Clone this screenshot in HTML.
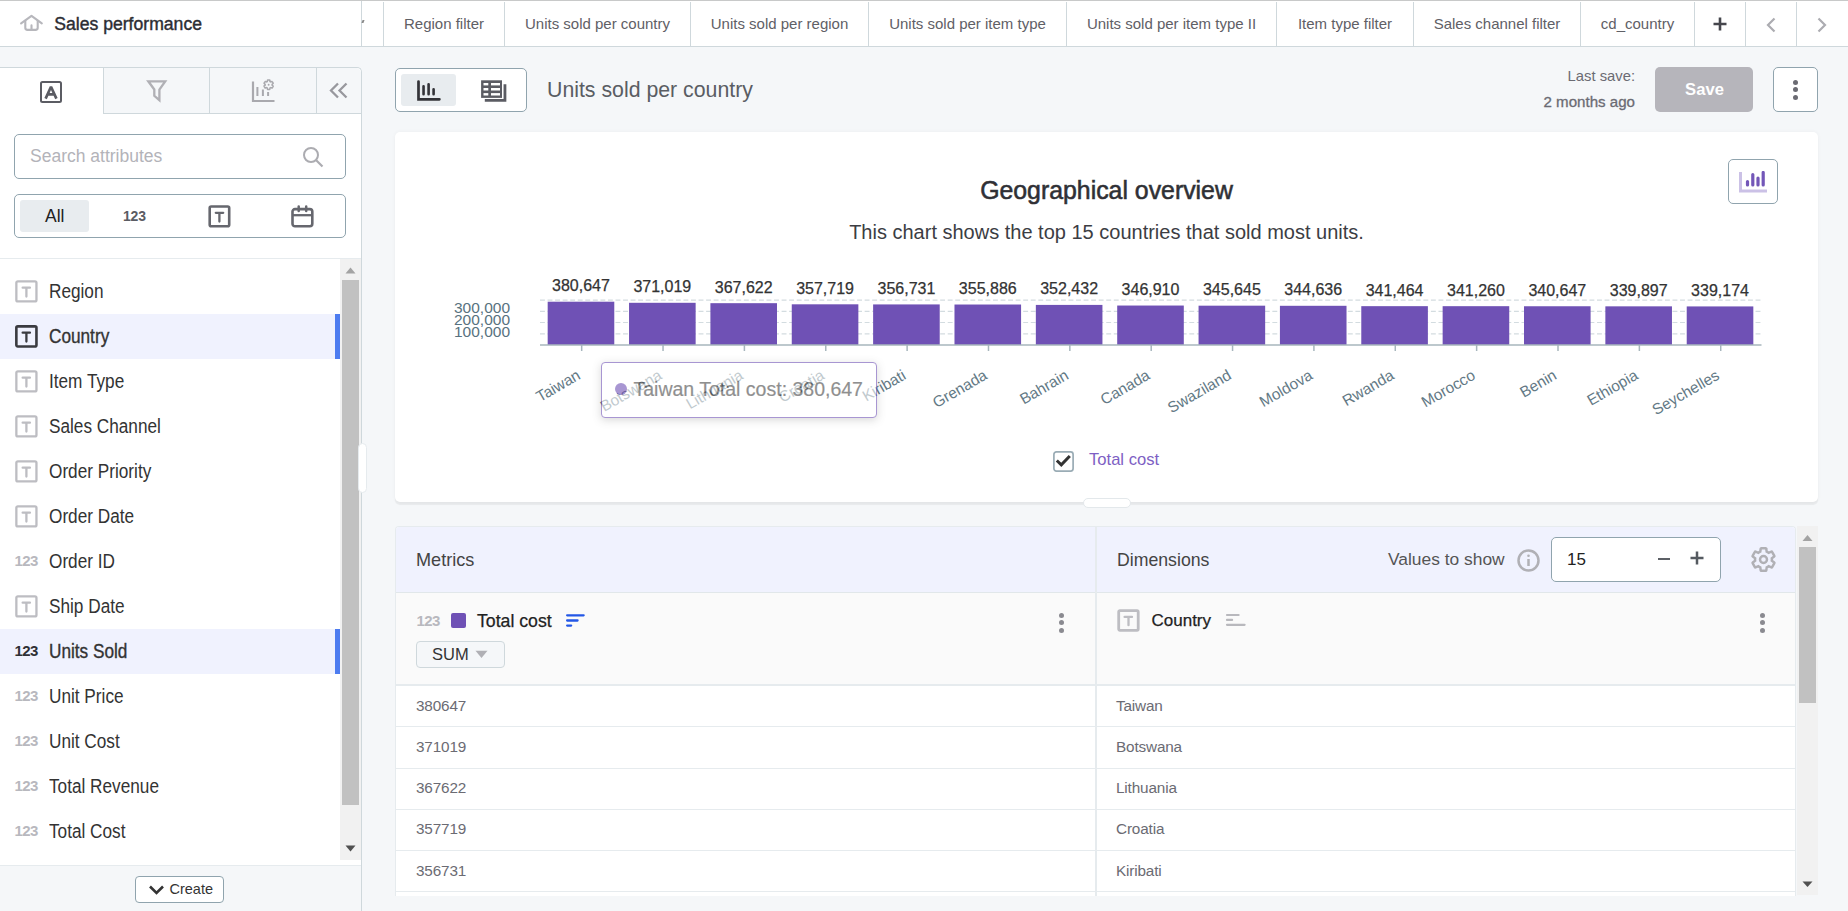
<!DOCTYPE html>
<html><head><meta charset="utf-8">
<style>
*{box-sizing:border-box;margin:0;padding:0}
html,body{width:1848px;height:911px;overflow:hidden}
body{position:relative;background:#f5f7f9;font-family:"Liberation Sans",sans-serif;color:#333}
.a{position:absolute}
.hdr{left:0;top:0;width:1848px;height:47px;background:#fff;border-top:1px solid #c8c9c9;border-bottom:1px solid #cfd8dc}
.tab{position:absolute;top:2px;height:44px;border-left:1px solid #cfd8dc;font-size:15px;color:#5f6066;text-align:center;line-height:43px;white-space:nowrap}
.side{left:0;top:67px;width:362px;height:844px;background:#fff;border-top:1px solid #cfd8dc;border-right:1px solid #cfd8dc;border-top-right-radius:5px}
.stab{position:absolute;top:0;height:46px;background:#f5f7f9;border-left:1px solid #cfd8dc;border-bottom:1px solid #cfd8dc}
.row{position:absolute;left:0;width:340px;height:45px}
.row .lbl{position:absolute;left:49px;top:0px;line-height:45px;font-size:20px;color:#333;white-space:nowrap;transform:scaleX(0.86);transform-origin:0 50%}
.ticon{position:absolute;left:15px;top:11px;width:23px;height:23px;border:2px solid #bdbdc2;border-radius:2px}
.ticon:after{content:"";position:absolute}
.n123{position:absolute;left:14.6px;top:-1.5px;line-height:45px;font-size:15px;font-weight:bold;color:#b8b8be;letter-spacing:-0.6px}
</style></head><body>

<!-- HEADER -->
<div class="a hdr"></div>
<div class="a" style="left:361px;top:1px;width:1px;height:45px;background:#cfd8dc"></div>
<svg class="a" style="left:19px;top:14px" width="25" height="19" viewBox="0 0 25 19">
  <path d="M2.1 9.3L12.5 1.9L22.8 9.3" fill="none" stroke="#b7b7bc" stroke-width="2.1" stroke-linecap="round" stroke-linejoin="round"/>
  <path d="M6.3 6.8V13.8Q6.3 15.9 8.4 15.9H16.6Q18.7 15.9 18.7 13.8V6.8M12.5 11.4V15.9" fill="none" stroke="#b7b7bc" stroke-width="2.1" stroke-linecap="round"/>
</svg>
<div class="a" style="left:54.3px;top:13.5px;font-size:17.6px;color:#2c2d33;white-space:nowrap;line-height:20px;-webkit-text-stroke:0.4px #2c2d33">Sales performance</div>

<div class="tab" style="left:383px;width:121px">Region filter</div>
<div class="tab" style="left:504px;width:186px">Units sold per country</div>
<div class="tab" style="left:690px;width:178px">Units sold per region</div>
<div class="tab" style="left:868px;width:198px">Units sold per item type</div>
<div class="tab" style="left:1066px;width:210px">Units sold per item type II</div>
<div class="tab" style="left:1276px;width:137px">Item type filter</div>
<div class="tab" style="left:1413px;width:167px">Sales channel filter</div>
<div class="tab" style="left:1580px;width:114px">cd_country</div>
<div class="tab" style="left:1694px;width:51px"></div>
<div class="tab" style="left:1745px;width:51px"></div>
<div class="tab" style="left:1796px;width:52px"></div>

<svg class="a" style="left:1712px;top:16px" width="16" height="16" viewBox="0 0 16 16"><path d="M8 1.5V14.5M1.5 8H14.5" stroke="#45464c" stroke-width="2.6"/></svg>
<svg class="a" style="left:1765px;top:17px" width="12" height="16" viewBox="0 0 12 16"><path d="M9.5 1.5L3 8L9.5 14.5" fill="none" stroke="#acacb1" stroke-width="2.2"/></svg>
<svg class="a" style="left:1816px;top:17px" width="12" height="16" viewBox="0 0 12 16"><path d="M2.5 1.5L9 8L2.5 14.5" fill="none" stroke="#acacb1" stroke-width="2.2"/></svg>
<div class="a" style="left:362px;top:20px;width:1.5px;height:3px;background:#8a8a8a;transform:skewX(-20deg)"></div>

<!-- SIDEBAR -->
<div class="a side">
  <div class="stab" style="left:103px;width:106px"></div>
  <div class="stab" style="left:209px;width:107px"></div>
  <div class="stab" style="left:316px;width:45px;border-top-right-radius:5px"></div>
</div>
<!-- A icon -->
<svg class="a" style="left:39px;top:80px" width="24" height="24" viewBox="0 0 24 24">
  <rect x="2" y="2" width="20" height="20" rx="1.5" fill="none" stroke="#5b5c63" stroke-width="2"/>
  <path d="M6.6 18.6L12 6.8L17.4 18.6M8.5 14.3H15.5" fill="none" stroke="#5b5c63" stroke-width="2.7" stroke-linejoin="bevel"/>
</svg>
<!-- funnel -->
<svg class="a" style="left:146px;top:79px" width="22" height="24" viewBox="0 0 22 24">
  <path d="M2.3 2.3H19.2L13.4 10.5V21.2L8.3 16.8V10.5Z" fill="none" stroke="#b0b0b5" stroke-width="2.3" stroke-linejoin="miter"/>
</svg>
<!-- chart gear -->
<svg class="a" style="left:250px;top:78px" width="26" height="26" viewBox="0 0 26 26">
  <path d="M3 3.5V23H24.5" fill="none" stroke="#a9a9ae" stroke-width="2.2"/>
  <path d="M7.4 9V18M12.9 11.5V18M18.1 14V18" fill="none" stroke="#a9a9ae" stroke-width="2"/>
  <g transform="translate(13 1.1) scale(0.47)">
  <path fill="none" stroke="#a9a9ae" stroke-width="3.3" d="M19.4 13c.04-.32.06-.66.06-1s-.02-.68-.06-1l2.1-1.65c.19-.15.24-.42.12-.64l-2-3.46c-.12-.22-.39-.3-.61-.22l-2.49 1c-.52-.4-1.08-.73-1.690-.98l-.38-2.65C14.46 2.18 14.25 2 14 2h-4c-.25 0-.46.18-.49.42l-.38 2.65c-.61.25-1.170.59-1.69.98l-2.49-1c-.23-.09-.49 0-.61.22l-2 3.46c-.13.22-.07.49.12.64L4.57 11c-.04.32-.07.65-.07 1s.03.68.07 1l-2.11 1.650c-.19.15-.24.42-.12.64l2 3.46c.12.22.39.3.61.22l2.49-1c.52.4 1.08.73 1.69.98l.38 2.65c.03.24.24.42.49.42h4c.25 0 .46-.18.49-.42l.38-2.65c.61-.25 1.17-.59 1.69-.98l2.49 1c.23.09.49 0 .61-.22l2-3.460c.12-.22.07-.49-.12-.64L19.4 13z"/>
  <circle cx="12" cy="12" r="2" fill="#a9a9ae"/>
  </g>
</svg>
<!-- << -->
<svg class="a" style="left:329px;top:82px" width="20" height="18" viewBox="0 0 20 18">
  <path d="M9 1.5L2 8.5L9 15.5M17.5 1.5L10.5 8.5L17.5 15.5" fill="none" stroke="#98989e" stroke-width="2.3"/>
</svg>

<!-- search -->
<div class="a" style="left:14px;top:134px;width:332px;height:45px;border:1px solid #90a4ae;border-radius:5px;background:#fff"></div>
<div class="a" style="left:30px;top:146px;font-size:17.5px;color:#b3b3b9;line-height:20px;white-space:nowrap">Search attributes</div>
<svg class="a" style="left:302px;top:146px" width="23" height="23" viewBox="0 0 23 23">
  <circle cx="9" cy="9" r="7" fill="none" stroke="#acacb1" stroke-width="2"/>
  <path d="M14 14L20.5 20.5" stroke="#acacb1" stroke-width="2.2"/>
</svg>

<!-- filter -->
<div class="a" style="left:14px;top:194px;width:332px;height:44px;border:1px solid #90a4ae;border-radius:5px;background:#fff"></div>
<div class="a" style="left:20px;top:200px;width:69px;height:32px;background:#e8ecef;border-radius:3px"></div>
<div class="a" style="left:45px;top:206px;font-size:17.5px;color:#222;line-height:20px">All</div>
<div class="a" style="left:123px;top:207px;font-size:14px;font-weight:bold;color:#5b5c63;line-height:18px;letter-spacing:-0.2px">123</div>
<svg class="a" style="left:207px;top:204px" width="25" height="25" viewBox="0 0 25 25">
  <rect x="2.7" y="2.5" width="19.5" height="19.8" rx="1.5" fill="none" stroke="#66676e" stroke-width="2.6"/>
  <path d="M8.8 8.8H16.2M12.4 8.8V17.5" fill="none" stroke="#66676e" stroke-width="2.3" stroke-linecap="round"/>
</svg>
<svg class="a" style="left:290px;top:204px" width="25" height="25" viewBox="0 0 25 25">
  <rect x="2.5" y="5.1" width="19.8" height="17.2" rx="2.5" fill="none" stroke="#66676e" stroke-width="2.6"/>
  <path d="M2.5 11.2H22.3" fill="none" stroke="#66676e" stroke-width="2.3"/>
  <path d="M8.7 2.4V7.1M16.2 2.4V7.1" fill="none" stroke="#66676e" stroke-width="2.5" stroke-linecap="round"/>
</svg>
<div class="a" style="left:0;top:258px;width:361px;height:1px;background:#e6ebee"></div>

<!-- LIST -->
<div class="row" style="top:269px;"><svg class="a" style="left:14px;top:11px" width="26" height="26" viewBox="0 0 26 26"><rect x="2.35" y="1.35" width="20.1" height="20.1" rx="1.5" fill="none" stroke="#bdbdc2" stroke-width="2.3"/><path d="M8.65 7.7H15.95M12.4 7.7V16.5" fill="none" stroke="#bdbdc2" stroke-width="2.3" stroke-linecap="round"/></svg><div class="lbl" style="">Region</div></div>
<div class="row" style="top:314px;background:#f0f2fe;"><div class="a" style="left:335px;top:0;width:5px;height:45px;background:#4d7cf0"></div><svg class="a" style="left:14px;top:11px" width="26" height="26" viewBox="0 0 26 26"><rect x="2.35" y="1.35" width="20.1" height="20.1" rx="1.5" fill="none" stroke="#3a3b40" stroke-width="2.6"/><path d="M8.65 7.7H15.95M12.4 7.7V16.5" fill="none" stroke="#3a3b40" stroke-width="2.3" stroke-linecap="round"/></svg><div class="lbl" style="-webkit-text-stroke:0.35px #333;">Country</div></div>
<div class="row" style="top:359px;"><svg class="a" style="left:14px;top:11px" width="26" height="26" viewBox="0 0 26 26"><rect x="2.35" y="1.35" width="20.1" height="20.1" rx="1.5" fill="none" stroke="#bdbdc2" stroke-width="2.3"/><path d="M8.65 7.7H15.95M12.4 7.7V16.5" fill="none" stroke="#bdbdc2" stroke-width="2.3" stroke-linecap="round"/></svg><div class="lbl" style="">Item Type</div></div>
<div class="row" style="top:404px;"><svg class="a" style="left:14px;top:11px" width="26" height="26" viewBox="0 0 26 26"><rect x="2.35" y="1.35" width="20.1" height="20.1" rx="1.5" fill="none" stroke="#bdbdc2" stroke-width="2.3"/><path d="M8.65 7.7H15.95M12.4 7.7V16.5" fill="none" stroke="#bdbdc2" stroke-width="2.3" stroke-linecap="round"/></svg><div class="lbl" style="">Sales Channel</div></div>
<div class="row" style="top:449px;"><svg class="a" style="left:14px;top:11px" width="26" height="26" viewBox="0 0 26 26"><rect x="2.35" y="1.35" width="20.1" height="20.1" rx="1.5" fill="none" stroke="#bdbdc2" stroke-width="2.3"/><path d="M8.65 7.7H15.95M12.4 7.7V16.5" fill="none" stroke="#bdbdc2" stroke-width="2.3" stroke-linecap="round"/></svg><div class="lbl" style="">Order Priority</div></div>
<div class="row" style="top:494px;"><svg class="a" style="left:14px;top:11px" width="26" height="26" viewBox="0 0 26 26"><rect x="2.35" y="1.35" width="20.1" height="20.1" rx="1.5" fill="none" stroke="#bdbdc2" stroke-width="2.3"/><path d="M8.65 7.7H15.95M12.4 7.7V16.5" fill="none" stroke="#bdbdc2" stroke-width="2.3" stroke-linecap="round"/></svg><div class="lbl" style="">Order Date</div></div>
<div class="row" style="top:539px;"><div class="n123" style="color:#b8b8be">123</div><div class="lbl" style="">Order ID</div></div>
<div class="row" style="top:584px;"><svg class="a" style="left:14px;top:11px" width="26" height="26" viewBox="0 0 26 26"><rect x="2.35" y="1.35" width="20.1" height="20.1" rx="1.5" fill="none" stroke="#bdbdc2" stroke-width="2.3"/><path d="M8.65 7.7H15.95M12.4 7.7V16.5" fill="none" stroke="#bdbdc2" stroke-width="2.3" stroke-linecap="round"/></svg><div class="lbl" style="">Ship Date</div></div>
<div class="row" style="top:629px;background:#f0f2fe;"><div class="a" style="left:335px;top:0;width:5px;height:45px;background:#4d7cf0"></div><div class="n123" style="color:#2f3035">123</div><div class="lbl" style="-webkit-text-stroke:0.35px #333;">Units Sold</div></div>
<div class="row" style="top:674px;"><div class="n123" style="color:#b8b8be">123</div><div class="lbl" style="">Unit Price</div></div>
<div class="row" style="top:719px;"><div class="n123" style="color:#b8b8be">123</div><div class="lbl" style="">Unit Cost</div></div>
<div class="row" style="top:764px;"><div class="n123" style="color:#b8b8be">123</div><div class="lbl" style="">Total Revenue</div></div>
<div class="row" style="top:809px;"><div class="n123" style="color:#b8b8be">123</div><div class="lbl" style="">Total Cost</div></div>

<!-- sidebar scrollbar -->
<div class="a" style="left:340px;top:259px;width:21px;height:601px;background:#f1f1f1"></div>
<div class="a" style="left:342px;top:280px;width:17px;height:525px;background:#c1c1c1"></div>
<svg class="a" style="left:345px;top:266px" width="11" height="8" viewBox="0 0 11 8"><path d="M0.5 7.5L5.5 1.5L10.5 7.5Z" fill="#a3a3a3"/></svg>
<svg class="a" style="left:345px;top:845px" width="11" height="8" viewBox="0 0 11 8"><path d="M0.5 0.5L5.5 6.5L10.5 0.5Z" fill="#505050"/></svg>
<div class="a" style="left:358px;top:443px;width:9px;height:50px;background:#fff;border:1px solid #e6ebee;border-radius:5px"></div>
<!-- footer -->
<div class="a" style="left:0;top:865px;width:361px;height:46px;background:#f5f7f9;border-top:1px solid #e6ebee"></div>
<div class="a" style="left:135px;top:876px;width:89px;height:27px;background:#fff;border:1px solid #90a4ae;border-radius:4px"></div>
<svg class="a" style="left:148px;top:884px" width="17" height="12" viewBox="0 0 17 12"><path d="M2 2.5L8.5 9L15 2.5" fill="none" stroke="#333" stroke-width="2.6"/></svg>
<div class="a" style="left:169.5px;top:880px;font-size:14.5px;color:#333;line-height:18px">Create</div>

<!-- MAIN TOP -->
<div class="a" style="left:395px;top:68px;width:132px;height:44px;background:#fff;border:1px solid #90a4ae;border-radius:5px"></div>
<div class="a" style="left:401px;top:74px;width:55px;height:32px;background:#e8ecef;border-radius:3px"></div>
<svg class="a" style="left:410px;top:75px" width="34" height="30" viewBox="0 0 34 30">
  <path d="M8.5 6.6V24.3H29.4" fill="none" stroke="#333338" stroke-width="2.7" stroke-linecap="round"/>
  <path d="M13.55 11.35V19.25M18.6 9.25V19.25M23.6 14.25V19.25" fill="none" stroke="#333338" stroke-width="2.6" stroke-linecap="round"/>
</svg>
<svg class="a" style="left:478px;top:75px" width="32" height="30" viewBox="0 0 32 30">
  <rect x="3.1" y="5.3" width="20.9" height="17.6" fill="#5b5c63"/>
  <g fill="#fff"><rect x="5.5" y="8" width="4.8" height="2.4"/><rect x="13" y="8" width="9" height="2.4"/><rect x="5.5" y="13" width="4.8" height="2.5"/><rect x="13" y="13" width="9" height="2.5"/><rect x="5.5" y="18.1" width="4.8" height="2.4"/><rect x="13" y="18.1" width="9" height="2.4"/></g>
  <path d="M6.8 25.4H26.95V9.2" fill="none" stroke="#5b5c63" stroke-width="2.8"/>
</svg>
<div class="a" style="left:547px;top:78px;font-size:21.3px;color:#5a5d63;line-height:24px;white-space:nowrap">Units sold per country</div>

<div class="a" style="left:1500px;top:67px;width:135px;text-align:right;font-size:14.8px;color:#6b6b73;line-height:18px">Last save:</div>
<div class="a" style="left:1500px;top:93px;width:135px;text-align:right;font-size:15.1px;color:#6b6b73;line-height:18px;-webkit-text-stroke:0.3px #6b6b73">2 months ago</div>
<div class="a" style="left:1655px;top:67px;width:98px;height:45px;background:#b6b5bb;border-radius:5px;color:#fff;font-size:16.6px;font-weight:bold;text-align:center;line-height:45px;padding-left:1px">Save</div>
<div class="a" style="left:1773px;top:67px;width:45px;height:45px;background:#fff;border:1px solid #90a4ae;border-radius:5px"></div>
<div class="a" style="left:1793px;top:79.5px;width:5px;height:5px;border-radius:50%;background:#6b6b73"></div>
<div class="a" style="left:1793px;top:87px;width:5px;height:5px;border-radius:50%;background:#6b6b73"></div>
<div class="a" style="left:1793px;top:94.5px;width:5px;height:5px;border-radius:50%;background:#6b6b73"></div>

<!-- CHART CARD -->
<div class="a" style="left:395px;top:132px;width:1423px;height:370px;background:#fff;border-radius:5px;box-shadow:0 3px 1px rgba(0,0,0,0.05),0 0 4px rgba(0,0,0,0.045)"></div>
<div class="a" style="left:395px;top:176px;width:1423px;text-align:center;font-size:24.85px;color:#2f3035;line-height:27px;padding-top:1px;-webkit-text-stroke:0.55px #2f3035">Geographical overview</div>
<div class="a" style="left:395px;top:220px;width:1423px;text-align:center;font-size:20px;color:#3c3d43;line-height:24px">This chart shows the top 15 countries that sold most units.</div>
<div class="a" style="left:1728px;top:159px;width:50px;height:45px;background:#fff;border:1px solid #90a4ae;border-radius:5px"></div>
<svg class="a" style="left:1738px;top:171px" width="30" height="24" viewBox="0 0 30 24">
  <path d="M2.5 1V20H29" fill="none" stroke="#cbc1e6" stroke-width="3"/>
  <path d="M9.5 10.5V14M14.8 3.5V14M20 7V14M25.2 1.5V14" fill="none" stroke="#7357b8" stroke-width="3.2" stroke-linecap="round"/>
</svg>
<!-- CHART -->
<svg class="a" style="left:0;top:0" width="1848" height="520" viewBox="0 0 1848 520">
<path d="M540 300.1H1761.5" stroke="#d3dce0" stroke-width="1.2" stroke-dasharray="4.9 2.65"/>
<path d="M540 311.3H1761.5" stroke="#d3dce0" stroke-width="1.2" stroke-dasharray="4.9 2.65"/>
<path d="M540 322.5H1761.5" stroke="#d3dce0" stroke-width="1.2" stroke-dasharray="4.9 2.65"/>
<path d="M540 333.8H1761.5" stroke="#d3dce0" stroke-width="1.2" stroke-dasharray="4.9 2.65"/>
<rect x="547.68" y="301.70" width="66.6" height="43.30" fill="#6f51b5"/>
<rect x="629.04" y="302.80" width="66.6" height="42.20" fill="#6f51b5"/>
<rect x="710.40" y="303.18" width="66.6" height="41.82" fill="#6f51b5"/>
<rect x="791.76" y="304.31" width="66.6" height="40.69" fill="#6f51b5"/>
<rect x="873.12" y="304.42" width="66.6" height="40.58" fill="#6f51b5"/>
<rect x="954.48" y="304.52" width="66.6" height="40.48" fill="#6f51b5"/>
<rect x="1035.84" y="304.91" width="66.6" height="40.09" fill="#6f51b5"/>
<rect x="1117.20" y="305.54" width="66.6" height="39.46" fill="#6f51b5"/>
<rect x="1198.56" y="305.68" width="66.6" height="39.32" fill="#6f51b5"/>
<rect x="1279.92" y="305.80" width="66.6" height="39.20" fill="#6f51b5"/>
<rect x="1361.28" y="306.16" width="66.6" height="38.84" fill="#6f51b5"/>
<rect x="1442.64" y="306.18" width="66.6" height="38.82" fill="#6f51b5"/>
<rect x="1524.00" y="306.25" width="66.6" height="38.75" fill="#6f51b5"/>
<rect x="1605.36" y="306.34" width="66.6" height="38.66" fill="#6f51b5"/>
<rect x="1686.72" y="306.42" width="66.6" height="38.58" fill="#6f51b5"/>
<path d="M540 345.0H1761.5" stroke="#a7b6bd" stroke-width="1.6"/>
<path d="M581.68 345.0V351" stroke="#a7b6bd" stroke-width="1.5"/>
<path d="M663.04 345.0V351" stroke="#a7b6bd" stroke-width="1.5"/>
<path d="M744.40 345.0V351" stroke="#a7b6bd" stroke-width="1.5"/>
<path d="M825.76 345.0V351" stroke="#a7b6bd" stroke-width="1.5"/>
<path d="M907.12 345.0V351" stroke="#a7b6bd" stroke-width="1.5"/>
<path d="M988.48 345.0V351" stroke="#a7b6bd" stroke-width="1.5"/>
<path d="M1069.84 345.0V351" stroke="#a7b6bd" stroke-width="1.5"/>
<path d="M1151.20 345.0V351" stroke="#a7b6bd" stroke-width="1.5"/>
<path d="M1232.56 345.0V351" stroke="#a7b6bd" stroke-width="1.5"/>
<path d="M1313.92 345.0V351" stroke="#a7b6bd" stroke-width="1.5"/>
<path d="M1395.28 345.0V351" stroke="#a7b6bd" stroke-width="1.5"/>
<path d="M1476.64 345.0V351" stroke="#a7b6bd" stroke-width="1.5"/>
<path d="M1558.00 345.0V351" stroke="#a7b6bd" stroke-width="1.5"/>
<path d="M1639.36 345.0V351" stroke="#a7b6bd" stroke-width="1.5"/>
<path d="M1720.72 345.0V351" stroke="#a7b6bd" stroke-width="1.5"/>
<text x="580.98" y="291.20" text-anchor="middle" font-family="Liberation Sans" font-size="16" fill="#333" stroke="#333" stroke-width="0.25">380,647</text>
<text x="662.34" y="292.30" text-anchor="middle" font-family="Liberation Sans" font-size="16" fill="#333" stroke="#333" stroke-width="0.25">371,019</text>
<text x="743.70" y="292.68" text-anchor="middle" font-family="Liberation Sans" font-size="16" fill="#333" stroke="#333" stroke-width="0.25">367,622</text>
<text x="825.06" y="293.81" text-anchor="middle" font-family="Liberation Sans" font-size="16" fill="#333" stroke="#333" stroke-width="0.25">357,719</text>
<text x="906.42" y="293.92" text-anchor="middle" font-family="Liberation Sans" font-size="16" fill="#333" stroke="#333" stroke-width="0.25">356,731</text>
<text x="987.78" y="294.02" text-anchor="middle" font-family="Liberation Sans" font-size="16" fill="#333" stroke="#333" stroke-width="0.25">355,886</text>
<text x="1069.14" y="294.41" text-anchor="middle" font-family="Liberation Sans" font-size="16" fill="#333" stroke="#333" stroke-width="0.25">352,432</text>
<text x="1150.50" y="295.04" text-anchor="middle" font-family="Liberation Sans" font-size="16" fill="#333" stroke="#333" stroke-width="0.25">346,910</text>
<text x="1231.86" y="295.18" text-anchor="middle" font-family="Liberation Sans" font-size="16" fill="#333" stroke="#333" stroke-width="0.25">345,645</text>
<text x="1313.22" y="295.30" text-anchor="middle" font-family="Liberation Sans" font-size="16" fill="#333" stroke="#333" stroke-width="0.25">344,636</text>
<text x="1394.58" y="295.66" text-anchor="middle" font-family="Liberation Sans" font-size="16" fill="#333" stroke="#333" stroke-width="0.25">341,464</text>
<text x="1475.94" y="295.68" text-anchor="middle" font-family="Liberation Sans" font-size="16" fill="#333" stroke="#333" stroke-width="0.25">341,260</text>
<text x="1557.30" y="295.75" text-anchor="middle" font-family="Liberation Sans" font-size="16" fill="#333" stroke="#333" stroke-width="0.25">340,647</text>
<text x="1638.66" y="295.84" text-anchor="middle" font-family="Liberation Sans" font-size="16" fill="#333" stroke="#333" stroke-width="0.25">339,897</text>
<text x="1720.02" y="295.92" text-anchor="middle" font-family="Liberation Sans" font-size="16" fill="#333" stroke="#333" stroke-width="0.25">339,174</text>
<text x="510" y="313.0" text-anchor="end" font-family="Liberation Sans" font-size="15.5" fill="#587280">300,000</text>
<text x="510" y="324.8" text-anchor="end" font-family="Liberation Sans" font-size="15.5" fill="#587280">200,000</text>
<text x="510" y="336.6" text-anchor="end" font-family="Liberation Sans" font-size="15.5" fill="#587280">100,000</text>
<text x="581.48" y="378.3" text-anchor="end" transform="rotate(-30 581.48 378.3)" font-family="Liberation Sans" font-size="15.4" fill="#637985">Taiwan</text>
<text x="662.84" y="378.3" text-anchor="end" transform="rotate(-30 662.84 378.3)" font-family="Liberation Sans" font-size="15.4" fill="#637985">Botswana</text>
<text x="744.20" y="378.3" text-anchor="end" transform="rotate(-30 744.20 378.3)" font-family="Liberation Sans" font-size="15.4" fill="#637985">Lithuania</text>
<text x="825.56" y="378.3" text-anchor="end" transform="rotate(-30 825.56 378.3)" font-family="Liberation Sans" font-size="15.4" fill="#637985">Croatia</text>
<text x="906.92" y="378.3" text-anchor="end" transform="rotate(-30 906.92 378.3)" font-family="Liberation Sans" font-size="15.4" fill="#637985">Kiribati</text>
<text x="988.28" y="378.3" text-anchor="end" transform="rotate(-30 988.28 378.3)" font-family="Liberation Sans" font-size="15.4" fill="#637985">Grenada</text>
<text x="1069.64" y="378.3" text-anchor="end" transform="rotate(-30 1069.64 378.3)" font-family="Liberation Sans" font-size="15.4" fill="#637985">Bahrain</text>
<text x="1151.00" y="378.3" text-anchor="end" transform="rotate(-30 1151.00 378.3)" font-family="Liberation Sans" font-size="15.4" fill="#637985">Canada</text>
<text x="1232.36" y="378.3" text-anchor="end" transform="rotate(-30 1232.36 378.3)" font-family="Liberation Sans" font-size="15.4" fill="#637985">Swaziland</text>
<text x="1313.72" y="378.3" text-anchor="end" transform="rotate(-30 1313.72 378.3)" font-family="Liberation Sans" font-size="15.4" fill="#637985">Moldova</text>
<text x="1395.08" y="378.3" text-anchor="end" transform="rotate(-30 1395.08 378.3)" font-family="Liberation Sans" font-size="15.4" fill="#637985">Rwanda</text>
<text x="1476.44" y="378.3" text-anchor="end" transform="rotate(-30 1476.44 378.3)" font-family="Liberation Sans" font-size="15.4" fill="#637985">Morocco</text>
<text x="1557.80" y="378.3" text-anchor="end" transform="rotate(-30 1557.80 378.3)" font-family="Liberation Sans" font-size="15.4" fill="#637985">Benin</text>
<text x="1639.16" y="378.3" text-anchor="end" transform="rotate(-30 1639.16 378.3)" font-family="Liberation Sans" font-size="15.4" fill="#637985">Ethiopia</text>
<text x="1720.52" y="378.3" text-anchor="end" transform="rotate(-30 1720.52 378.3)" font-family="Liberation Sans" font-size="15.4" fill="#637985">Seychelles</text>
</svg>

<div class="a" style="left:601px;top:362px;width:276px;height:56px;opacity:0.6">
  <div class="a" style="left:0;top:0;width:276px;height:56px;background:#fff;border:1px solid #6f51b5;border-radius:4px;box-shadow:0 2px 8px rgba(0,0,0,0.25)"></div>
  <div class="a" style="left:14px;top:21px;width:12px;height:12px;border-radius:50%;background:#6f51b5"></div>
  <div class="a" style="left:32.5px;top:16px;font-size:19.5px;color:#464646;line-height:22px;white-space:nowrap;-webkit-text-stroke:0.2px #464646">Taiwan Total cost: 380,647</div>
</div>
<!-- legend -->
<svg class="a" style="left:1052px;top:450px" width="23" height="23" viewBox="0 0 23 23">
  <rect x="1.9" y="1.9" width="19.2" height="19.2" rx="2.5" fill="#fff" stroke="#9aacb5" stroke-width="1.7"/>
  <path d="M4.8 10.5L9.3 14.8L17.8 6" fill="none" stroke="#333" stroke-width="3"/>
</svg>
<div class="a" style="left:1089px;top:450px;font-size:16.6px;color:#7e5fc4;line-height:19px;white-space:nowrap">Total cost</div>
<div class="a" style="left:1083px;top:498px;width:48px;height:10px;background:#fff;border:1px solid #e3e8eb;border-radius:5px"></div>

<!-- TABLE -->
<div class="a" style="left:395px;top:526px;width:1401px;height:370px;background:#fff;border:1px solid #e6ebee;border-bottom:none;border-radius:4px 4px 0 0;overflow:hidden">
  <div class="a" style="left:0;top:0;width:1401px;height:66px;background:#f0f2fe;border-bottom:1px solid #e1e7ea"></div>
  <div class="a" style="left:0;top:66px;width:1401px;height:93px;background:#fafafa;border-bottom:2px solid #e6ebee"></div>
  <div class="a" style="left:698.5px;top:0;width:2px;height:370px;background:#e6ebee"></div>
  <div class="a" style="left:0;top:199.4px;width:1401px;height:1px;background:#e6ebee"></div>
  <div class="a" style="left:0;top:240.5px;width:1401px;height:1px;background:#e6ebee"></div>
  <div class="a" style="left:0;top:282.3px;width:1401px;height:1px;background:#e6ebee"></div>
  <div class="a" style="left:0;top:323.4px;width:1401px;height:1px;background:#e6ebee"></div>
  <div class="a" style="left:0;top:364.2px;width:1401px;height:1px;background:#e6ebee"></div>
</div>
<div class="a" style="left:416px;top:696.50px;font-size:15.3px;letter-spacing:-0.15px;color:#6b6b73;line-height:18px">380647</div>
<div class="a" style="left:1116px;top:696.50px;font-size:15.3px;letter-spacing:-0.15px;color:#6b6b73;line-height:18px">Taiwan</div>
<div class="a" style="left:416px;top:737.50px;font-size:15.3px;letter-spacing:-0.15px;color:#6b6b73;line-height:18px">371019</div>
<div class="a" style="left:1116px;top:737.50px;font-size:15.3px;letter-spacing:-0.15px;color:#6b6b73;line-height:18px">Botswana</div>
<div class="a" style="left:416px;top:778.50px;font-size:15.3px;letter-spacing:-0.15px;color:#6b6b73;line-height:18px">367622</div>
<div class="a" style="left:1116px;top:778.50px;font-size:15.3px;letter-spacing:-0.15px;color:#6b6b73;line-height:18px">Lithuania</div>
<div class="a" style="left:416px;top:820.25px;font-size:15.3px;letter-spacing:-0.15px;color:#6b6b73;line-height:18px">357719</div>
<div class="a" style="left:1116px;top:820.25px;font-size:15.3px;letter-spacing:-0.15px;color:#6b6b73;line-height:18px">Croatia</div>
<div class="a" style="left:416px;top:861.50px;font-size:15.3px;letter-spacing:-0.15px;color:#6b6b73;line-height:18px">356731</div>
<div class="a" style="left:1116px;top:861.50px;font-size:15.3px;letter-spacing:-0.15px;color:#6b6b73;line-height:18px">Kiribati</div>

<div class="a" style="left:416px;top:550px;font-size:18.1px;color:#444;line-height:21px">Metrics</div>
<div class="a" style="left:1117px;top:550px;font-size:17.7px;color:#444;line-height:21px">Dimensions</div>
<div class="a" style="left:416.5px;top:611.5px;font-size:15px;font-weight:bold;color:#b8b8be;line-height:17px;letter-spacing:-0.6px">123</div>
<div class="a" style="left:451px;top:613px;width:15px;height:15px;background:#6f51b5;border-radius:2px"></div>
<div class="a" style="left:477px;top:610.5px;font-size:17.7px;color:#222;line-height:21px;-webkit-text-stroke:0.25px #222;white-space:nowrap">Total cost</div>
<svg class="a" style="left:565px;top:612px" width="22" height="16" viewBox="0 0 22 16">
  <path d="M2.15 3.3H18.65M2.15 8.5H12.55M2.15 13.6H6.15" stroke="#2357e6" stroke-width="2.3" stroke-linecap="round"/>
</svg>
<div class="a" style="left:416px;top:641px;width:89px;height:27px;background:#f5f7f9;border:1px solid #cfd8dc;border-radius:4px"></div>
<div class="a" style="left:432px;top:645px;font-size:16.5px;color:#333;line-height:19px">SUM</div>
<svg class="a" style="left:475px;top:650px" width="13" height="9" viewBox="0 0 13 9"><path d="M0.5 0.8H12.5L6.5 8Z" fill="#b0b0b5"/></svg>
<div class="a" style="left:1059px;top:612.5px;width:5px;height:5px;border-radius:50%;background:#8a8a90"></div>
<div class="a" style="left:1059px;top:620px;width:5px;height:5px;border-radius:50%;background:#8a8a90"></div>
<div class="a" style="left:1059px;top:627.5px;width:5px;height:5px;border-radius:50%;background:#8a8a90"></div>
<div class="a" style="left:1760px;top:612.5px;width:5px;height:5px;border-radius:50%;background:#8a8a90"></div>
<div class="a" style="left:1760px;top:620px;width:5px;height:5px;border-radius:50%;background:#8a8a90"></div>
<div class="a" style="left:1760px;top:627.5px;width:5px;height:5px;border-radius:50%;background:#8a8a90"></div>

<svg class="a" style="left:1116px;top:608px" width="26" height="26" viewBox="0 0 26 26">
  <rect x="2.7" y="2.7" width="19.5" height="19.6" rx="1.2" fill="none" stroke="#bdbdc2" stroke-width="2.8"/>
  <path d="M8.6 8.9H16M12.5 8.9V17.2" fill="none" stroke="#bdbdc2" stroke-width="2.3" stroke-linecap="round"/>
</svg>
<div class="a" style="left:1151.5px;top:609.5px;font-size:17px;color:#222;line-height:21px;-webkit-text-stroke:0.25px #222;white-space:nowrap">Country</div>
<svg class="a" style="left:1224px;top:613px" width="24" height="14" viewBox="0 0 24 14">
  <path d="M3 2H14.6M3 6.9H8.1M3 11.8H20.6" stroke="#b8b8bd" stroke-width="2.2" stroke-linecap="round"/>
</svg>
<div class="a" style="left:1388px;top:548.5px;font-size:17.4px;color:#555;line-height:21px;white-space:nowrap">Values to show</div>
<svg class="a" style="left:1516px;top:548px" width="25" height="25" viewBox="0 0 25 25">
  <circle cx="12.5" cy="12.5" r="10" fill="none" stroke="#b0b0b5" stroke-width="2.5"/>
  <circle cx="12.5" cy="7.8" r="1.3" fill="#b0b0b5"/>
  <path d="M12.5 11V18" stroke="#b0b0b5" stroke-width="2.5"/>
</svg>
<div class="a" style="left:1551px;top:537px;width:170px;height:45px;background:#fff;border:1px solid #90a4ae;border-radius:5px"></div>
<div class="a" style="left:1567px;top:549px;font-size:17px;color:#222;line-height:21px">15</div>
<div class="a" style="left:1658px;top:557.5px;width:12px;height:2.4px;background:#5c6066"></div>
<svg class="a" style="left:1689px;top:550px" width="16" height="16" viewBox="0 0 16 16"><path d="M8 1.5V14.5M1.5 8H14.5" stroke="#555a60" stroke-width="2.5"/></svg>
<svg class="a" style="left:1750px;top:546px" width="27" height="27" viewBox="0 0 24 24">
  <path fill="none" stroke="#b0b0b5" stroke-width="2.2" d="M19.4 13c.04-.32.06-.66.06-1s-.02-.68-.06-1l2.1-1.65c.19-.15.24-.42.12-.64l-2-3.46c-.12-.22-.39-.3-.61-.22l-2.49 1c-.52-.4-1.08-.73-1.69-.98l-.38-2.65C14.46 2.18 14.25 2 14 2h-4c-.25 0-.46.18-.49.42l-.38 2.65c-.61.25-1.17.59-1.69.98l-2.49-1c-.23-.09-.49 0-.61.22l-2 3.46c-.13.22-.07.49.12.64L4.57 11c-.04.32-.07.65-.07 1s.03.68.07 1l-2.11 1.65c-.19.15-.24.42-.12.64l2 3.46c.12.22.39.3.61.22l2.49-1c.52.4 1.08.73 1.69.98l.38 2.65c.03.24.24.42.49.42h4c.25 0 .46-.18.49-.42l.38-2.65c.61-.25 1.17-.59 1.69-.98l2.49 1c.23.09.49 0 .61-.22l2-3.46c.12-.22.07-.49-.12-.64L19.4 13z"/>
  <circle cx="12" cy="12" r="3.1" fill="none" stroke="#b0b0b5" stroke-width="2.2"/>
</svg>
<!-- table scrollbar -->
<div class="a" style="left:1797px;top:526px;width:21px;height:369px;background:#f1f1f1"></div>
<div class="a" style="left:1799px;top:547px;width:17px;height:156px;background:#c1c1c1"></div>
<svg class="a" style="left:1802px;top:534px" width="11" height="8" viewBox="0 0 11 8"><path d="M0.5 7L5.5 1L10.5 7Z" fill="#a3a3a3"/></svg>
<svg class="a" style="left:1802px;top:881px" width="11" height="7" viewBox="0 0 11 7"><path d="M0.5 0.5L5.5 6L10.5 0.5Z" fill="#505050"/></svg>
</body></html>
